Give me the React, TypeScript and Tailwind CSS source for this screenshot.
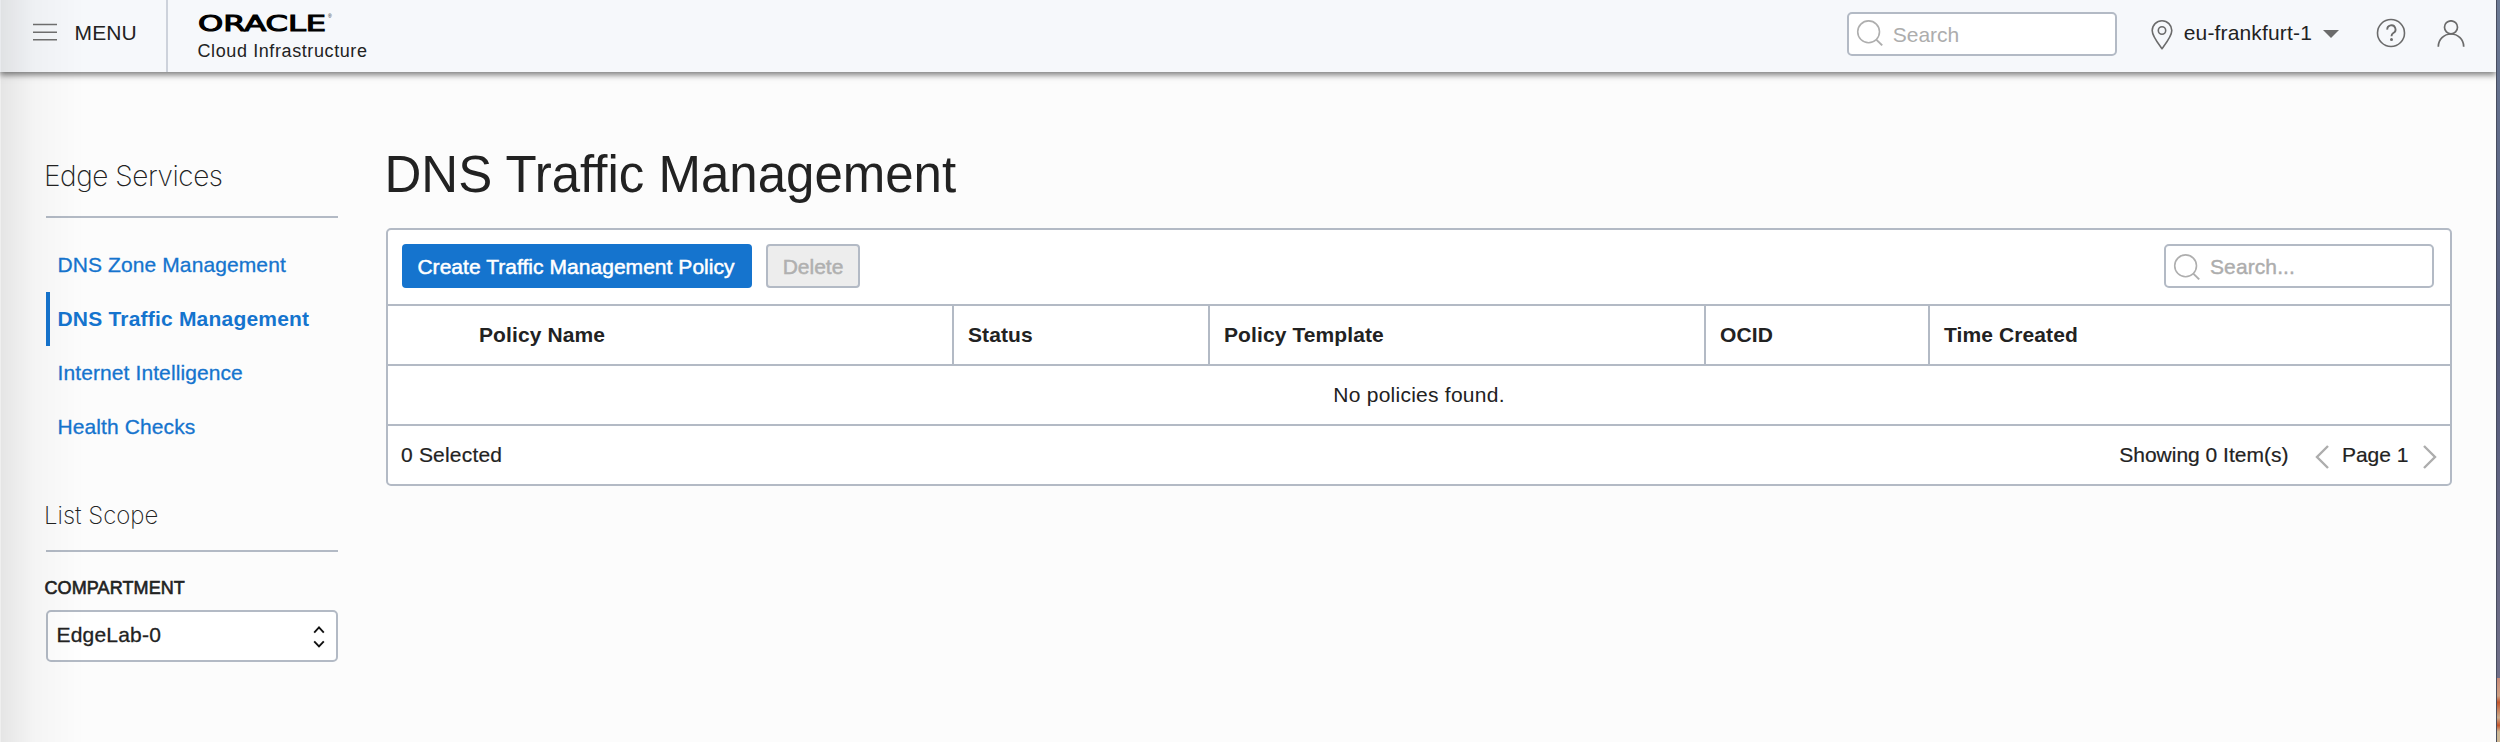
import React from "react";

const navItems = [
  { label: "DNS Zone Management", active: false },
  { label: "DNS Traffic Management", active: true },
  { label: "Internet Intelligence", active: false },
  { label: "Health Checks", active: false },
];

const columns = [
  { label: "Policy Name", cell: "w-[566px] pl-[91px] border-r-2" },
  { label: "Status", cell: "w-[256px] pl-[14px] border-r-2" },
  { label: "Policy Template", cell: "w-[496px] pl-[14px] border-r-2" },
  { label: "OCID", cell: "w-[224px] pl-[14px] border-r-2" },
  { label: "Time Created", cell: "flex-1 pl-[14px]" },
];

function SearchBox({ placeholder, icon, text }: { placeholder: string; icon: string; text: string }) {
  return (
    <div className="flex h-[44px] w-[270px] items-center rounded-[5px] border-2 border-[#b3bac5] bg-white pl-[7px]">
      <svg
        className={"h-[28px] w-[28px] shrink-0 " + icon}
        viewBox="0 0 28 28"
        fill="none"
        stroke="#aeaeae"
        strokeWidth="1.6"
      >
        <circle cx="12.6" cy="11.8" r="10.9" />
        <path d="M20.3 19.6 26.2 25.4" strokeWidth="2" />
      </svg>
      <span className={"mt-[2px] ml-[9px] text-[21px] leading-[24px] text-[#adadad] " + text}>{placeholder}</span>
    </div>
  );
}

function Header() {
  return (
    <header className="relative z-10 flex h-[72px] shrink-0 items-center bg-[#f6f8fb] shadow-[0_3px_6px_rgba(0,0,0,0.5)]">
      <div className="flex h-full w-[168px] items-center border-r-2 border-[#cdd2db] pl-[33px]">
        <svg className="-mt-[8px] h-[18px] w-[24px]" viewBox="0 0 24 18" stroke="#707070" strokeWidth="1.5">
          <path d="M0 1.6h24M0 9.2h24M0 16.8h24" />
        </svg>
        <span className="-mt-[6px] ml-[17.5px] text-[21px] leading-[24px] tracking-[0.15px]">MENU</span>
      </div>
      <div className="flex h-full flex-col pt-[12px] pl-[30px]">
        <svg className="h-[23px] w-[136px]" viewBox="0 0 136 23">
          <text
            x="0"
            y="19.3"
            textLength="128"
            lengthAdjust="spacingAndGlyphs"
            fontFamily="DejaVu Sans"
            fontSize="22"
            fill="#000"
            stroke="#000"
            strokeWidth="1.1"
          >
            ORACLE
          </text>
          <text x="130" y="6" fontFamily="Liberation Sans" fontSize="5" fill="#222">
            ®
          </text>
        </svg>
        <span className="mt-[5px] -ml-[0.5px] text-[18px] leading-[22px] tracking-[0.6px]">Cloud Infrastructure</span>
      </div>
      <div className="mr-[31px] ml-auto flex h-full items-center">
        <div className="-mt-[4px]">
          <SearchBox placeholder="Search" icon="" text="" />
        </div>
        <svg
          className="-mt-[2px] ml-[33px] h-[32px] w-[24px]"
          viewBox="0 0 24 32"
          fill="none"
          stroke="#6b6b6b"
          strokeWidth="1.6"
        >
          <path d="M12 29.6C9 25.500 2.200 17.500 2.200 11.600A9.800 9.800 0 0 1 21.800 11.600C21.800 17.500 15 25.500 12 29.600Z" />
          <circle cx="12" cy="11.5" r="3.700" />
        </svg>
        <span className="-mt-[6px] ml-[10px] text-[21px] leading-[24px] tracking-[0.16px]">eu-frankfurt-1</span>
        <svg className="-mt-[4px] ml-[11px] h-[8px] w-[16px]" viewBox="0 0 16 8" fill="#6b6b6b">
          <path d="M0 0h16L8 8z" />
        </svg>
        <svg
          className="-mt-[6px] ml-[37px] h-[30px] w-[30px]"
          viewBox="0 0 30 30"
          fill="none"
          stroke="#6b6b6b"
          strokeWidth="1.6"
        >
          <circle cx="15" cy="15" r="13.5" />
          <path d="M11.300 11.700A4.100 4.100 0 1 1 17.300 15C15.900 15.900 15.500 16.500 15.500 18.300" strokeWidth="1.900" />
          <circle cx="15.500" cy="21.600" r="1.500" fill="#6b6b6b" stroke="none" />
        </svg>
        <svg
          className="-mt-[4px] ml-[31px] h-[28px] w-[28px]"
          viewBox="0 0 28 28"
          fill="none"
          stroke="#6b6b6b"
          strokeWidth="1.700"
        >
          <circle cx="14" cy="7.300" r="6.500" />
          <path d="M1.300 26.700A12.700 12.700 0 0 1 26.700 26.700" />
        </svg>
      </div>
    </header>
  );
}

function Sidebar() {
  return (
    <aside className="w-[292px] shrink-0">
      <h2 className="h-[146px] border-b-2 border-[#b3bac5] pt-[87px] font-['Inter'] text-[28px] leading-[34px] font-extralight tracking-[-0.46px]">
        <span className="-ml-[2px]">Edge Services</span>
      </h2>
      <nav className="mt-[20px]">
        {navItems.map((item) => (
          <a
            key={item.label}
            className={
              "flex h-[54px] items-center border-l-4 pl-[7.5px] text-[21px] leading-[24px] text-[#1574ce] " +
              (item.active
                ? "border-[#1574ce] font-bold tracking-[0.2px]"
                : "border-transparent tracking-[0.1px] [-webkit-text-stroke:0.3px_#1574ce]")
            }
          >
            {item.label}
          </a>
        ))}
      </nav>
      <h2 className="h-[98px] border-b-2 border-[#b3bac5] pt-[47px] font-['Inter'] text-[24px] leading-[30px] font-extralight">
        <span className="-ml-[2px]">List Scope</span>
      </h2>
      <div className="mt-[25px] -ml-[1.5px] h-[33px] text-[18px] leading-[22px] tracking-[0.1px] [-webkit-text-stroke:0.6px_#222]">
        COMPARTMENT
      </div>
      <div className="flex h-[52px] items-center justify-between rounded-[5px] border-2 border-[#b3bac5] bg-white pr-[10px] pl-[8.5px]">
        <span className="-mt-[2px] text-[21px] leading-[24px] tracking-[0.2px] [-webkit-text-stroke:0.3px_#222]">
          EdgeLab-0
        </span>
        <svg className="h-[24px] w-[14px]" viewBox="0 0 14 24" fill="none" stroke="#111" strokeWidth="1.900">
          <path d="M2.200 8.600 7 3.400 11.800 8.600M2.200 17.400 7 22.400 11.800 17.400" />
        </svg>
      </div>
    </aside>
  );
}

function Chevron({ d }: { d: string }) {
  return (
    <svg className="mt-[4px] h-[24px] w-[14px]" viewBox="0 0 14 24" fill="none" stroke="#adadad" strokeWidth="2.400">
      <path d={d} />
    </svg>
  );
}

function PolicyTable() {
  return (
    <section className="flex h-[258px] flex-col rounded-[5px] border-2 border-[#b3bac5] bg-white text-[21px] leading-[24px]">
      <div className="flex h-[74px] items-start pt-[14px] pr-[16px] pl-[14px]">
        <button className="flex h-[44px] w-[350px] items-center justify-center rounded-[4px] bg-[#1574ce] pt-[2px] pr-[2px] tracking-[0.04px] text-white [-webkit-text-stroke:0.5px_#fff]">
          Create Traffic Management Policy
        </button>
        <button className="ml-[14px] flex h-[44px] w-[94px] items-center justify-center rounded-[4px] border-2 border-[#b3bac5] bg-[#ededed] pt-[2px] text-[#b0b0b0] [-webkit-text-stroke:0.5px_#b0b0b0]">
          Delete
        </button>
        <div className="ml-auto">
          <SearchBox
            placeholder="Search..."
            icon="mt-[4px]"
            text="tracking-[0.1px] [-webkit-text-stroke:0.4px_#adadad]"
          />
        </div>
      </div>
      <div className="flex h-[62px] border-y-2 border-[#b3bac5] font-bold tracking-[0.1px]">
        {columns.map((c) => (
          <div key={c.label} className={"flex items-center border-[#b3bac5] " + c.cell}>
            {c.label}
          </div>
        ))}
      </div>
      <div className="flex h-[60px] items-center justify-center border-b-2 border-[#b3bac5] tracking-[0.25px]">
        No policies found.
      </div>
      <div className="flex h-[58px] items-center pr-[13px] pl-[13px] [-webkit-text-stroke:0.2px_#222]">
        <span className="tracking-[0.2px]">0 Selected</span>
        <span className="ml-auto">Showing 0 Item(s)</span>
        <div className="ml-[27px] flex items-center">
          <Chevron d="M13 1 2 12 13 23" />
          <span className="mr-[14.5px] ml-[12.5px]">Page 1</span>
          <Chevron d="M1 1 12 12 1 23" />
        </div>
      </div>
    </section>
  );
}

export default function App() {
  return (
    <div className="flex h-[742px] w-[2500px] overflow-hidden bg-[#fcfcfc] font-['Liberation_Sans',Arial,sans-serif] text-[#222]">
      <div className="relative flex w-[2496px] shrink-0 flex-col overflow-hidden">
        <Header />
        <div className="flex flex-1 pr-[44px] pl-[46px]">
          <Sidebar />
          <main className="ml-[48px] flex-1">
            <h1 className="-ml-[1.5px] h-[156px] pt-[74px] text-[51px] leading-[58px]">DNS Traffic Management</h1>
            <PolicyTable />
          </main>
        </div>
        <div className="pointer-events-none absolute inset-y-0 left-0 z-20 w-[84px] border-l border-black/5 bg-linear-to-r from-black/9 via-black/3 via-40% to-transparent" />
      </div>
      <div className="flex w-[4px] flex-col border-l border-[#474c5e]">
        <div className="h-[678px] bg-linear-to-b from-[#6c7a94] via-[#535a7c] to-[#716f88]" />
        <div className="flex-1 bg-[linear-gradient(#c98a78,#cfa184_28%,#c4562c_38%,#c98a66_52%,#cdab8a_62%,#c4562c_74%,#cdb795_84%,#cdb795)]" />
      </div>
    </div>
  );
}
